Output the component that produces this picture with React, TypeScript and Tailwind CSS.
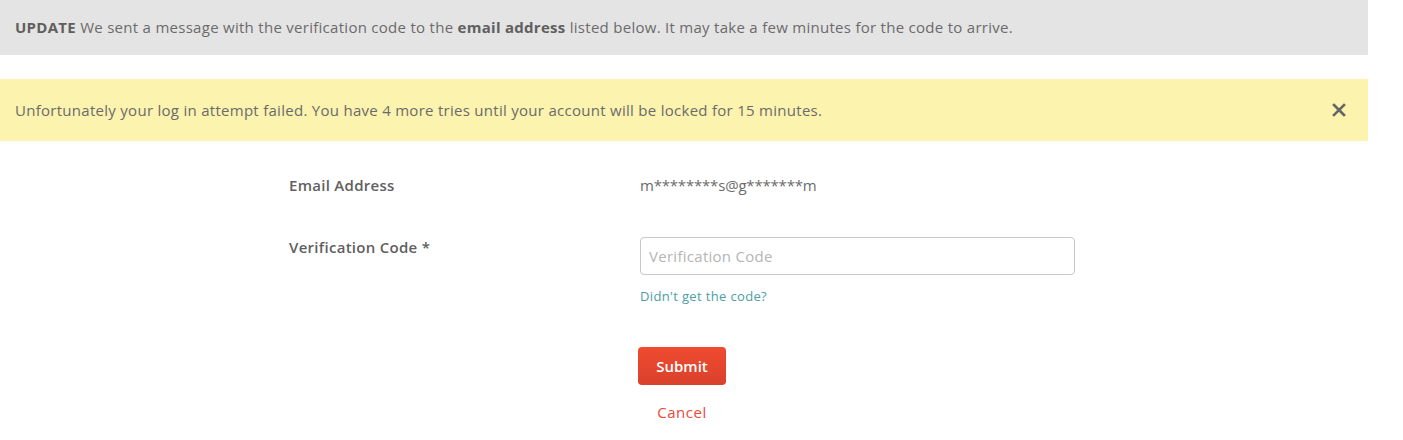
export default function App() {
  return (
    <div
      className="min-h-[440px] bg-white tracking-[0.28px] text-[#6b6b6b]"
      style={{ fontFamily: "'Open Sans', Lato, sans-serif" }}
    >
      <div className="w-[1368px]">
        <div className="flex h-[55px] items-center bg-[#e4e4e4] px-[15px] text-[15px]">
          <p>
            <strong className="font-bold text-[#5f5f5f]">UPDATE</strong> We sent a message with the verification code to the{" "}
            <strong className="font-bold text-[#5f5f5f]">email address</strong> listed below. It may take a few minutes for the code to arrive.
          </p>
        </div>
        <div className="mt-[24px] flex h-[62px] items-center justify-between bg-[#fbf3ae] pl-[15px] pr-[22px] text-[15px]">
          <p>Unfortunately your log in attempt failed. You have 4 more tries until your account will be locked for 15 minutes.</p>
          <button className="text-[#666]" aria-label="Close">
            <svg width="14" height="14" viewBox="0 0 14 14">
              <path d="M2 2L12 12M12 2L2 12" stroke="currentColor" strokeWidth="2.6" strokeLinecap="square" />
            </svg>
          </button>
        </div>
      </div>

      <div className="ml-[289px] mt-[33px] text-[15px]">
        <div className="flex">
          <div className="w-[351px] font-semibold text-[#5f5f5f]">Email Address</div>
          <div className="tracking-[-0.2px]">m********s@g*******m</div>
        </div>
        <div className="mt-[39px] flex">
          <div className="w-[351px] font-semibold text-[#5f5f5f]">Verification Code *</div>
          <div className="pt-[1px]">
            <input
              className="h-[38px] w-[435px] rounded-[4px] border border-[#c8c8c8] px-[8px] text-[15px] tracking-[0.28px] placeholder:text-[#b5b5b5] outline-none"
              placeholder="Verification Code"
            />
            <a className="mt-[12px] block text-[13px] tracking-[0.35px] text-[#4b9ea3]" href="#">
              Didn't get the code?
            </a>
          </div>
        </div>
        <div className="ml-[349px] mt-[41px] flex w-[88px] flex-col items-center">
          <button className="h-[38px] w-[88px] rounded-[4px] bg-gradient-to-b from-[#ef4b2f] to-[#d9412c] text-[15px] font-semibold tracking-normal text-white">
            Submit
          </button>
          <a className="mt-[16px] text-[15px] tracking-[0.5px] text-[#e84a3a]" href="#">
            Cancel
          </a>
        </div>
      </div>
    </div>
  );
}
